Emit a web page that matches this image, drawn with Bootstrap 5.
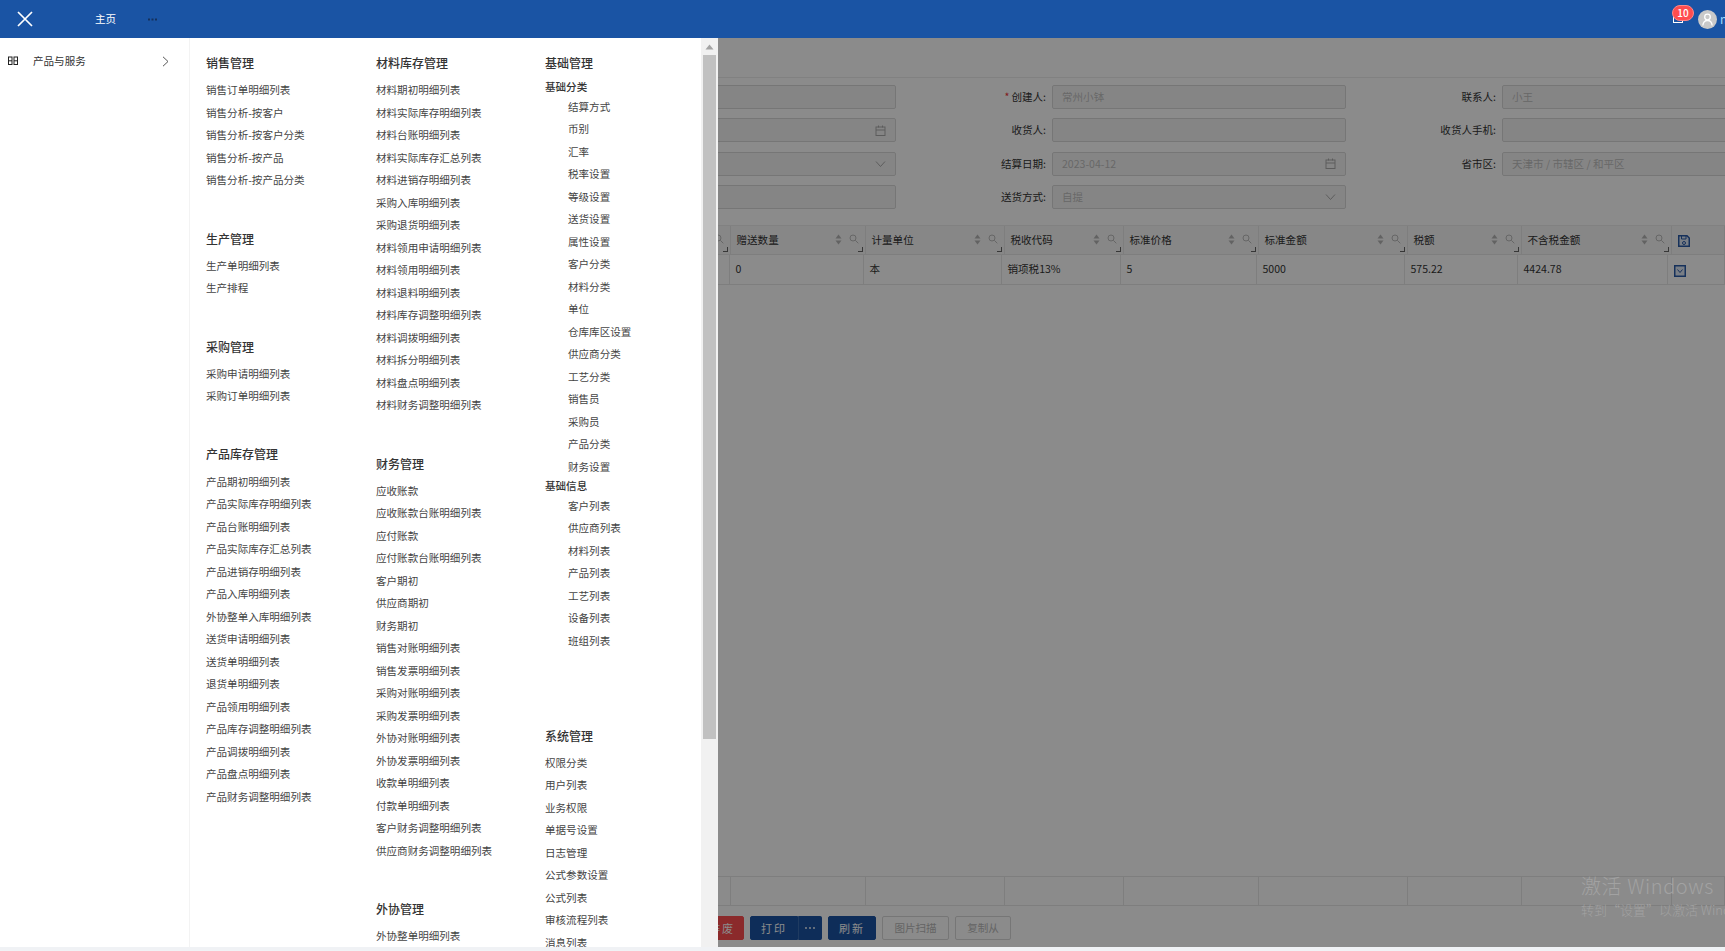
<!DOCTYPE html>
<html lang="zh-CN">
<head>
<meta charset="utf-8">
<title>主页</title>
<link href="https://cdn.jsdelivr.net/npm/bootstrap@5.3.0/dist/css/bootstrap.min.css" rel="stylesheet">
<style>
html,body{height:100%;overflow:hidden;}
body{font-family:"Noto Sans CJK SC","Liberation Sans",sans-serif;font-size:10.55px;color:#333;background:#f0f2f5;}
.shell{position:relative;width:1725px;height:951px;overflow:hidden;}
.topbar{height:38px;background:#1a54a4;color:#fff;padding:0;flex-wrap:nowrap;}
.close-ico{width:16px;height:16px;margin-left:17px;display:block;}
.home-link{margin-left:62px;width:22px;font-size:10.55px;color:#fff;line-height:1;}
.more-dots{margin-left:31px;display:block;}
.bell-wrap{position:relative;width:22px;height:38px;margin-right:4px;}
.bell-wrap svg{position:absolute;left:1px;top:15px;}
.count-pill{position:absolute;left:0;top:5px;min-width:22px;height:16px;padding:0;border-radius:8px;background:#ff4d4f;border:1px solid #f88;color:#fff;font-size:10px;line-height:14px;font-weight:500;}
.avatar-ico{width:19px;height:19px;display:block;}
.user-name{width:5px;margin-left:3px;overflow:hidden;color:#9fdcff;font-size:12px;line-height:1;}
.backdrop-page{height:909px;background:#fff;padding-top:39px;}
.page-rule{border-top:1px solid #ececec;}
.form-grid{display:grid;grid-template-columns:repeat(3,450px);margin-left:452px;padding-top:7px;row-gap:9.3px;width:1350px;}
.form-cell{display:flex;align-items:center;height:24px;}
.form-lbl{width:150px;text-align:right;padding-right:6px;color:#333;white-space:nowrap;}
.req{color:#e33;margin-right:2px;}
.fake-input{width:294px;height:24px;border:1px solid #d9d9d9;border-radius:2px;background:#f5f5f5;color:#bfbfbf;padding:0 9px;display:flex;align-items:center;justify-content:space-between;}
.grid-wrap{margin-top:16px;}
table.dt{table-layout:fixed;width:1725px;margin:0;border-collapse:collapse;font-size:10.55px;color:#333;}
table.dt td,table.dt th{border:0;border-right:1px solid #e8e8e8;padding:0;box-sizing:border-box;background:none;vertical-align:middle;}
.dt-head{background:#f7f7f7;border-top:1px solid #ececec;border-bottom:1px solid #e8e8e8;}
.dt-head th{height:28px;font-weight:400;padding-left:6px!important;position:relative;}
.dt-body td{height:29px;padding-left:6px!important;}
.dt-body{border-bottom:1px solid #e8e8e8;}
.sort-ico{position:absolute;right:23px;top:8px;}
.find-ico{position:absolute;right:6px;top:8px;}
.grip-ico{position:absolute;right:2px;bottom:2px;}
.blank-zone{height:591px;}
table.dt.sum-row td{height:28px;}
.sum-wrap{border-top:1px solid #e8e8e8;border-bottom:1px solid #e8e8e8;}
.act-bar{height:41px;padding:10px 0 0 700px;gap:6px;flex-wrap:nowrap;}
.act-btn{height:24px;padding:0;border-radius:2px;font-size:11px;letter-spacing:2px;line-height:22px;--bs-btn-font-size:11px;}
.act-red{width:44px;background:#ff4d4f;border:1px solid #ff4d4f;color:#fff;}
.act-blue{background:#1a54a4;border:1px solid #1a54a4;color:#fff;}
.act-print{width:48px;border-radius:2px 0 0 2px;}
.act-more{width:24px;border-radius:0 2px 2px 0;border-left:1px solid #3a6cb2;}
.act-ref{width:48px;}
.act-off{background:#fff;border:1px solid #d9d9d9;color:#b8b8b8;letter-spacing:0;font-size:10.55px;}
.act-img{width:67px;}
.act-copy{width:56px;}
.page-dim{position:absolute;left:0;right:0;top:38px;height:909px;background:rgba(0,0,0,.455);}
.winmark{position:absolute;left:1581px;top:876px;color:#a2a2a2;white-space:nowrap;line-height:1;font-weight:300;}
.winmark-a{font-size:20px;height:27px;letter-spacing:.6px;}
.winmark-b{font-size:13px;}
.drawer{position:absolute;left:0;top:38px;width:718px;height:909px;background:#fff;overflow:hidden;}
.drawer-side{width:190px;border-right:1px solid #f3f3f3;flex:none;}
.side-row{height:46px;padding:0 20px 0 8px;color:#333;}
.side-grid{width:10px;height:10px;margin-right:15px;}
.drawer-cols{flex:1;padding:16.3px 0 0 16px;overflow:hidden;}
.menu-col{flex:none;}
.col-a{width:170px;}
.col-b{width:169px;}
.col-c{width:146px;}
.grp{padding-bottom:37.75px;}
.grp-late{padding-top:36.5px;}
.grp-h{font-size:12px;line-height:18px;font-weight:500;margin:0 0 7.15px;color:#333;}
.grp-sub{font-size:10.55px;line-height:13px;font-weight:500;margin:0 0 2.5px;padding-top:1px;color:#333;}
.grp-sub.next{padding-top:0;margin-top:1px;}
.grp-list{list-style:none;margin:0;padding:0;}
.grp-list li{line-height:22.5px;height:22.5px;white-space:nowrap;color:#444;}
.grp-list.deep{padding-left:23px;}
.fake-scroll{width:17px;flex:none;background:#f1f1f1;display:flex;flex-direction:column;align-items:center;}
.fake-up{height:17px;display:flex;align-items:center;justify-content:center;flex:none;}
.fake-thumb{width:13px;height:684px;background:#c1c1c1;flex:none;}
</style>
</head>
<body>
<div class="shell">
  <nav class="navbar topbar d-flex align-items-center">
    <svg class="close-ico" viewBox="0 0 16 16"><path d="M1 1L15 15M15 1L1 15" stroke="#fff" stroke-width="1.7" fill="none"/></svg>
    <span class="home-link">主页</span>
    <svg class="more-dots" width="9" height="3" viewBox="0 0 9 3" fill="#14305c"><rect width="2" height="2" y=".5"/><rect x="3.500" width="2" height="2" y=".5"/><rect x="7" width="2" height="2" y=".5"/></svg>
    <div class="ms-auto d-flex align-items-center">
      <div class="bell-wrap">
        <svg width="13" height="9" viewBox="0 0 13 9"><rect x=".5" y=".5" width="9" height="7" fill="none" stroke="#fff"/></svg>
        <span class="badge count-pill">10</span>
      </div>
      <svg class="avatar-ico" viewBox="0 0 19 19"><circle cx="9.500" cy="9.500" r="9.500" fill="#c9c9c9"/><circle cx="9.500" cy="7" r="2.800" fill="none" stroke="#fff" stroke-width="1.300"/><path d="M4.800 15.500c.4-3.500 2.300-5 4.700-5s4.300 1.500 4.700 5" fill="none" stroke="#fff" stroke-width="1.300"/></svg>
      <span class="user-name">n</span>
    </div>
  </nav>

  <main class="backdrop-page">
    <div class="page-rule"></div>
    <div class="form-grid">
      <div class="form-cell"><span class="form-lbl"></span><div class="fake-input"></div></div>
      <div class="form-cell"><span class="form-lbl"><span class="req">*</span>创建人:</span><div class="fake-input">常州小钵</div></div>
      <div class="form-cell"><span class="form-lbl">联系人:</span><div class="fake-input">小王</div></div>
      <div class="form-cell"><span class="form-lbl"></span><div class="fake-input"><span></span><svg width="11" height="11" viewBox="0 0 11 11" fill="none" stroke="#aaa"><rect x="1" y="2" width="9" height="8.500"/><path d="M1 5h9M3.500 .5v2M7.500 .5v2"/></svg></div></div>
      <div class="form-cell"><span class="form-lbl">收货人:</span><div class="fake-input"></div></div>
      <div class="form-cell"><span class="form-lbl">收货人手机:</span><div class="fake-input"></div></div>
      <div class="form-cell"><span class="form-lbl"></span><div class="fake-input"><span></span><svg width="11" height="8" viewBox="0 0 11 8" fill="none" stroke="#aaa"><path d="M1 1.500L5.500 6.500L10 1.500"/></svg></div></div>
      <div class="form-cell"><span class="form-lbl">结算日期:</span><div class="fake-input"><span>2023-04-12</span><svg width="11" height="11" viewBox="0 0 11 11" fill="none" stroke="#aaa"><rect x="1" y="2" width="9" height="8.500"/><path d="M1 5h9M3.500 .5v2M7.500 .5v2"/></svg></div></div>
      <div class="form-cell"><span class="form-lbl">省市区:</span><div class="fake-input">天津市 / 市辖区 / 和平区</div></div>
      <div class="form-cell"><span class="form-lbl"></span><div class="fake-input"></div></div>
      <div class="form-cell"><span class="form-lbl">送货方式:</span><div class="fake-input"><span>自提</span><svg width="11" height="8" viewBox="0 0 11 8" fill="none" stroke="#aaa"><path d="M1 1.500L5.500 6.500L10 1.500"/></svg></div></div>
    </div>

    <div class="grid-wrap">
      <div class="dt-head">
        <table class="table dt" id="headTable"><colgroup><col style="width:730px"><col style="width:135px"><col style="width:139px"><col style="width:119px"><col style="width:135px"><col style="width:149px"><col style="width:114px"><col style="width:150px"><col></colgroup><tbody><tr id="headRow"></tr></tbody></table>
      </div>
      <div class="dt-body">
        <table class="table dt"><colgroup><col style="width:729px"><col style="width:134px"><col style="width:138px"><col style="width:119px"><col style="width:136px"><col style="width:148px"><col style="width:113px"><col style="width:150px"><col></colgroup><tbody><tr>
          <td></td><td>0</td><td>本</td><td>销项税13%</td><td>5</td><td>5000</td><td>575.22</td><td>4424.78</td>
          <td><svg width="12" height="12" viewBox="0 0 12 12"><rect x=".75" y=".75" width="10.500" height="10.500" fill="#dfe8f5" stroke="#2a5aa8" stroke-width="1.500"/><path d="M3.500 4.500L6 7.500L8.500 4.500" fill="none" stroke="#2a5aa8"/></svg></td>
        </tr></tbody></table>
      </div>
      <div class="blank-zone"></div>
      <div class="sum-wrap">
        <table class="table dt sum-row"><colgroup><col style="width:730px"><col style="width:135px"><col style="width:139px"><col style="width:119px"><col style="width:135px"><col style="width:149px"><col style="width:114px"><col style="width:150px"><col></colgroup><tbody><tr><td></td><td></td><td></td><td></td><td></td><td></td><td></td><td></td><td></td></tr></tbody></table>
      </div>
      <div class="d-flex act-bar">
        <button class="btn act-btn act-red" type="button">作废</button>
        <div class="d-flex">
          <button class="btn act-btn act-blue act-print" type="button">打印</button>
          <button class="btn act-btn act-blue act-more d-flex align-items-center justify-content-center" type="button" aria-label="更多"><svg width="10" height="2" viewBox="0 0 10 2" fill="#fff"><circle cx="1" cy="1" r=".9"/><circle cx="5" cy="1" r=".9"/><circle cx="9" cy="1" r=".9"/></svg></button>
        </div>
        <button class="btn act-btn act-blue act-ref" type="button">刷新</button>
        <button class="btn act-btn act-off act-img" type="button">图片扫描</button>
        <button class="btn act-btn act-off act-copy" type="button">复制从</button>
      </div>
    </div>
  </main>

  <div class="page-dim"></div>
  <div class="winmark"><div class="winmark-a">激活 Windows</div><div class="winmark-b">转到“设置”以激活 Windows。</div></div>

  <aside class="drawer d-flex">
    <div class="drawer-side">
      <div class="side-row d-flex align-items-center">
        <svg class="side-grid" viewBox="0 0 10 10" fill="none" stroke="#222"><rect x=".5" y="1" width="3.500" height="7.500"/><rect x="6" y="1" width="3.500" height="7.500"/><path d="M.5 4.800h3.500M6 4.800h3.500"/></svg>
        <span>产品与服务</span>
        <svg class="ms-auto" width="7" height="11" viewBox="0 0 7 11" fill="none" stroke="#555"><path d="M1 .8L6 5.500L1 10.200"/></svg>
      </div>
    </div>
    <div class="drawer-cols d-flex" id="cols"></div>
    <div class="fake-scroll">
      <div class="fake-up"><svg width="9" height="6" viewBox="0 0 9 6"><path d="M4.500 .5L8.500 5.500H.5z" fill="#a3a3a3"/></svg></div>
      <div class="fake-thumb"></div>
    </div>
  </aside>
</div>

<script src="https://cdn.jsdelivr.net/npm/bootstrap@5.3.0/dist/js/bootstrap.bundle.min.js"></script>
<script>
var sortI='<svg class="sort-ico" width="7" height="11" viewBox="0 0 7 11"><path d="M3.500 .5L6.500 4.500H.5zM3.500 10.500L.5 6.500H6.500z" fill="#b5b5b5"/></svg>';
var findI='<svg class="find-ico" width="10" height="10" viewBox="0 0 10 10" fill="none" stroke="#bbb"><circle cx="4" cy="4" r="3"/><path d="M6.300 6.300L9.300 9.300"/></svg>';
var gripI='<svg class="grip-ico" width="5" height="5" viewBox="0 0 5 5"><path d="M4 0h1v5H0V4h4z" fill="#666"/></svg>';
var heads=['','赠送数量','计量单位','税收代码','标准价格','标准金额','税额','不含税金额'];
document.getElementById('headRow').innerHTML=heads.map(function(h){return '<th>'+h+sortI+findI+gripI+'</th>';}).join('')+
 '<th><svg width="12" height="12" viewBox="0 0 12 12"><path d="M1 .75H9L11.250 3V11.250H.75V.75z" fill="#dfe8f5" stroke="#2a5aa8" stroke-width="1.500"/><path d="M3.500 1V4H8V1" fill="none" stroke="#2a5aa8"/><circle cx="6" cy="8" r="1.500" fill="none" stroke="#2a5aa8"/></svg></th>';

function li(a){return a.map(function(t){return '<li>'+t+'</li>';}).join('');}
function grp(title,items,cls){return '<section class="grp '+(cls||'')+'"><h6 class="grp-h">'+title+'</h6><ul class="grp-list">'+li(items)+'</ul></section>';}
var colA=grp('销售管理',['销售订单明细列表','销售分析-按客户','销售分析-按客户分类','销售分析-按产品','销售分析-按产品分类'])+
 grp('生产管理',['生产单明细列表','生产排程'])+
 grp('采购管理',['采购申请明细列表','采购订单明细列表'])+
 grp('产品库存管理',['产品期初明细列表','产品实际库存明细列表','产品台账明细列表','产品实际库存汇总列表','产品进销存明细列表','产品入库明细列表','外协整单入库明细列表','送货申请明细列表','送货单明细列表','退货单明细列表','产品领用明细列表','产品库存调整明细列表','产品调拨明细列表','产品盘点明细列表','产品财务调整明细列表']);
var colB=grp('材料库存管理',['材料期初明细列表','材料实际库存明细列表','材料台账明细列表','材料实际库存汇总列表','材料进销存明细列表','采购入库明细列表','采购退货明细列表','材料领用申请明细列表','材料领用明细列表','材料退料明细列表','材料库存调整明细列表','材料调拨明细列表','材料拆分明细列表','材料盘点明细列表','材料财务调整明细列表'])+
 grp('财务管理',['应收账款','应收账款台账明细列表','应付账款','应付账款台账明细列表','客户期初','供应商期初','财务期初','销售对账明细列表','销售发票明细列表','采购对账明细列表','采购发票明细列表','外协对账明细列表','外协发票明细列表','收款单明细列表','付款单明细列表','客户财务调整明细列表','供应商财务调整明细列表'])+
 grp('外协管理',['外协整单明细列表']);
var colC='<section class="grp"><h6 class="grp-h">基础管理</h6><div class="grp-sub">基础分类</div><ul class="grp-list deep">'+li(['结算方式','币别','汇率','税率设置','等级设置','送货设置','属性设置','客户分类','材料分类','单位','仓库库区设置','供应商分类','工艺分类','销售员','采购员','产品分类','财务设置'])+'</ul><div class="grp-sub next">基础信息</div><ul class="grp-list deep">'+li(['客户列表','供应商列表','材料列表','产品列表','工艺列表','设备列表','班组列表'])+'</ul></section>'+
 grp('系统管理',['权限分类','用户列表','业务权限','单据号设置','日志管理','公式参数设置','公式列表','审核流程列表','消息列表'],'grp-late');
document.getElementById('cols').innerHTML='<div class="menu-col col-a">'+colA+'</div><div class="menu-col col-b">'+colB+'</div><div class="menu-col col-c">'+colC+'</div>';
</script>
</body>
</html>
